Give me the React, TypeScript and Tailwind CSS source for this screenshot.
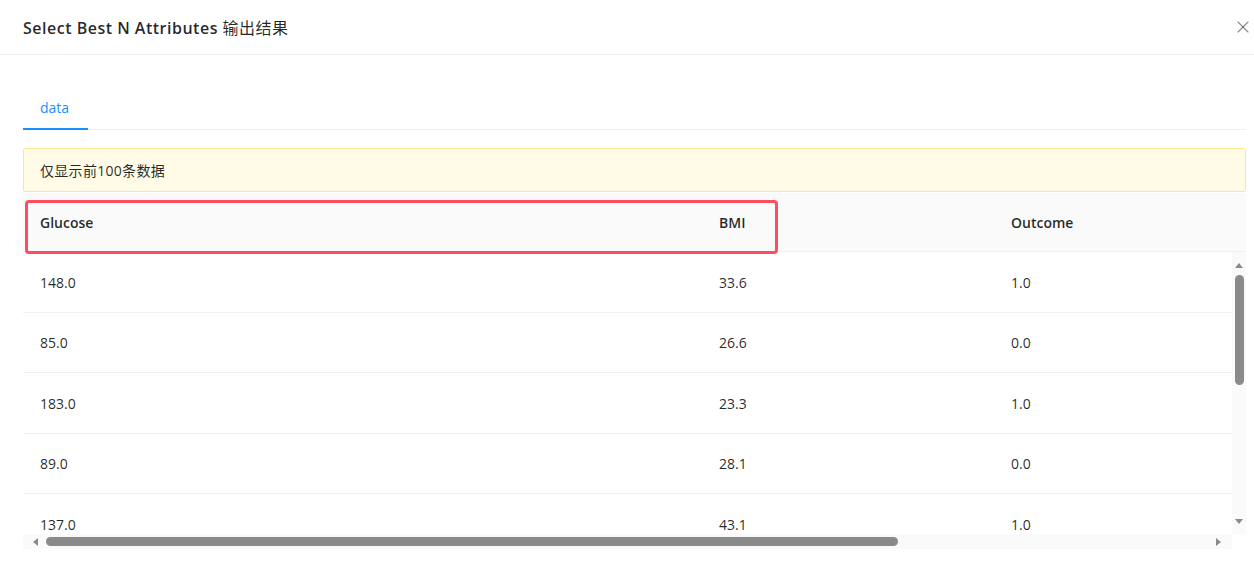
import { X } from "lucide-react";

const rows = [
  { glucose: "148.0", bmi: "33.6", outcome: "1.0" },
  { glucose: "85.0", bmi: "26.6", outcome: "0.0" },
  { glucose: "183.0", bmi: "23.3", outcome: "1.0" },
  { glucose: "89.0", bmi: "28.1", outcome: "0.0" },
  { glucose: "137.0", bmi: "43.1", outcome: "1.0" },
];

export default function App() {
  return (
    <div
      className="relative h-[570px] w-full overflow-hidden bg-white text-[14px] text-[#000000d9]"
      style={{ fontFamily: '"Open Sans", "Noto Sans", "Noto Sans CJK SC", sans-serif' }}
    >
      {/* Header */}
      <div className="flex h-[55px] items-center justify-between border-b border-[#f0f0f0] pl-[23px] pr-[1px]">
        <div className="pt-[1px] text-[16px] font-semibold tracking-[0.5px] text-[#000000d9]">
          Select Best N Attributes <span className="font-normal">输出结果</span>
        </div>
        <X className="h-[20px] w-[20px] text-[#00000073]" strokeWidth={1.4} />
      </div>

      <div className="pl-[23px] pr-[8px]">
        {/* Tabs */}
        <div className="mt-[32px] flex h-[43px] border-b border-[#f0f0f0]">
          <div className="relative flex w-[65px] items-center pb-[2px] pl-[17px] text-[#1890ff]">
            data
            <div className="absolute bottom-[-1px] left-0 right-0 h-[2px] bg-[#1890ff]" />
          </div>
        </div>

        {/* Alert */}
        <div className="mt-[18px] flex h-[44px] items-center rounded-[2px] border border-[#ffe58f] bg-[#fffbe6] px-[16px] tracking-[0.3px]">
          仅显示前100条数据
        </div>

        {/* Table */}
        <div className="mt-[1px]">
          <div className="grid h-[59px] grid-cols-[680px_292px_1fr] items-center border-b border-[#f0f0f0] bg-[#fafafa] font-semibold">
            <div className="px-[17px]">Glucose</div>
            <div className="px-[16px]">BMI</div>
            <div className="px-[16px]">Outcome</div>
          </div>

          <div className="flex h-[282px]">
            <div className="flex-1 overflow-hidden">
              {rows.map((r) => (
                <div
                  key={r.glucose}
                  className="grid h-[60.5px] grid-cols-[680px_292px_1fr] items-center border-b border-[#f0f0f0] pt-[1px]"
                >
                  <div className="px-[17px]">{r.glucose}</div>
                  <div className="px-[16px]">{r.bmi}</div>
                  <div className="px-[16px]">{r.outcome}</div>
                </div>
              ))}
            </div>
            {/* vertical scrollbar */}
            <div className="flex w-[14px] flex-col items-center bg-[#fafafa] pt-[11px]">
              <div className="h-0 w-0 border-x-[4px] border-b-[5px] border-x-transparent border-b-[#8a8a8a]" />
              <div className="mt-[7px] h-[110px] w-[9px] rounded-full bg-[#8a8a8a]" />
              <div className="flex-1" />
              <div className="mb-[10px] h-0 w-0 border-x-[4px] border-t-[5px] border-x-transparent border-t-[#8a8a8a]" />
            </div>
          </div>

          {/* horizontal scrollbar */}
          <div className="flex h-[15px] w-[1209px] items-center bg-[#fafafa] px-[10px]">
            <div className="h-0 w-0 border-y-[4px] border-r-[5px] border-y-transparent border-r-[#8a8a8a]" />
            <div className="ml-[8px] h-[9px] w-[852px] rounded-full bg-[#8a8a8a]" />
            <div className="flex-1" />
            <div className="mr-[1px] h-0 w-0 border-y-[4px] border-l-[5px] border-y-transparent border-l-[#8a8a8a]" />
          </div>
        </div>
      </div>

      {/* annotation box */}
      <div className="pointer-events-none absolute left-[25px] top-[200px] h-[54px] w-[753px] rounded-[4px] border-[3px] border-[#ff4d5f]" />
    </div>
  );
}
